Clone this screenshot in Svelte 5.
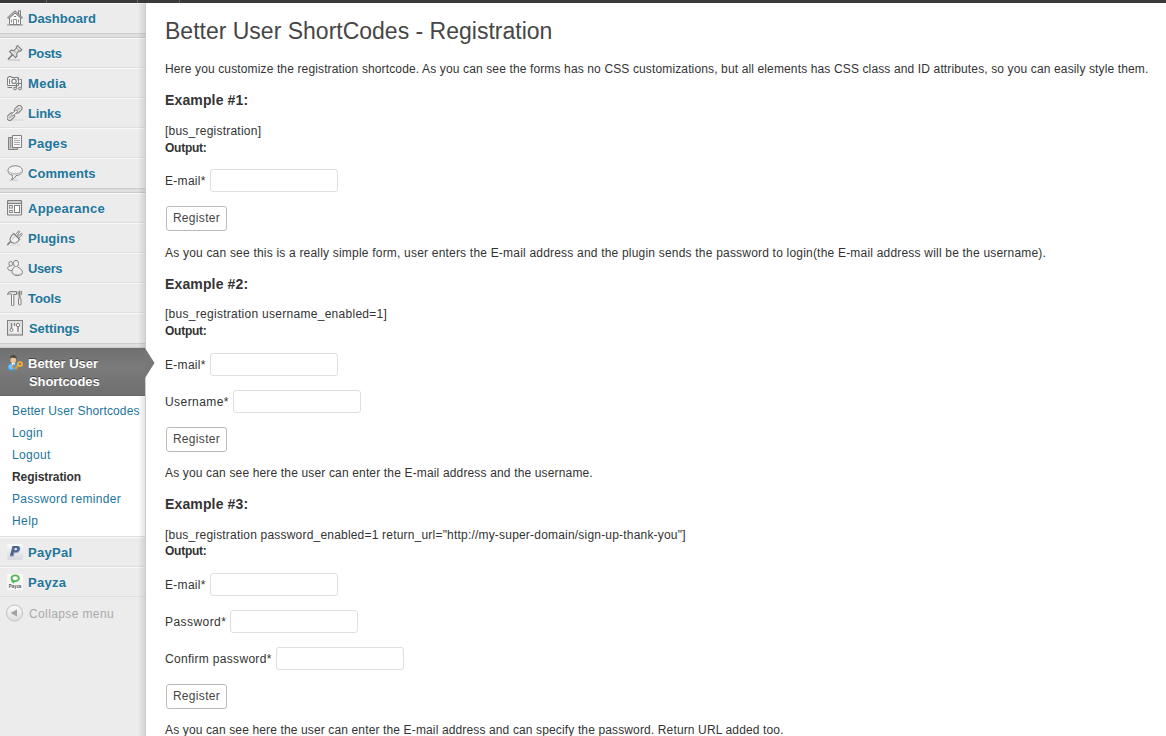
<script>
  // Each entry pairs a label with its tracking in pixels.
  const groups = [
    [['Dashboard', 0]],
    [['Posts', -0.35], ['Media', 0.3], ['Links', -0.15], ['Pages', 0.25], ['Comments', 0.05]],
    [['Appearance', 0.25], ['Plugins', 0.05], ['Users', -0.4], ['Tools', -0.1], ['Settings', -0.1]]
  ];
  const submenu = [
    ['Better User Shortcodes', 0.13], ['Login', 0.35], ['Logout', 0.35],
    ['Registration', -0.08], ['Password reminder', 0.34], ['Help', 0.4]
  ];
  const examples = [
    {
      code: ['[bus_registration]', 0.23],
      fields: [['E-mail*', 0.3]],
      note: ['As you can see this is a really simple form, user enters the E-mail address and the plugin sends the password to login(the E-mail address will be the username).', 0.2]
    },
    {
      code: ['[bus_registration username_enabled=1]', 0.28],
      fields: [['E-mail*', 0.3], ['Username*', 0.44]],
      note: ['As you can see here the user can enter the E-mail address and the username.', 0.155]
    },
    {
      code: ['[bus_registration password_enabled=1 return_url="http://my-super-domain/sign-up-thank-you"]', 0.197],
      fields: [['E-mail*', 0.3], ['Password*', 0.44], ['Confirm password*', 0.31]],
      note: ['As you can see here the user can enter the E-mail address and can specify the password. Return URL added too.', 0.135]
    }
  ];
</script>

{#snippet icon(name)}
  <svg class="icon" viewBox="0 0 16 16" width="16" height="16" fill="none" stroke="#808080" stroke-width="1">
    {#if name === 'Dashboard'}
      <path d="M2.5 8v6.5h11V8L8 3z" fill="#f7f7f7" />
      <path d="M.7 8.2 8 1.500l7.300 6.700" stroke-width="2" />
      <path d="M1.200 8 8 1.900 14.800 8" stroke="#eee" stroke-width=".6" />
      <path d="M11.500 1v3.500M13.500 1v5.500M11 .9h3" />
      <path d="M6.500 14V9.500h3V14M4.500 9.500v3M11.500 9.500v3M0 15h16" stroke="#909090" />
      <path d="M7 6.500h2" />
    {:else if name === 'Posts'}
      <path d="M1 15h12" stroke="#ccc" stroke-width="1.500" />
      <path d="m1 14.500 5-5.500" stroke="#777" stroke-width="1.400" />
      <path d="m2.500 6.500 1.800-1.400 2.500.5 2.700-2.500-.2-1.400L10.500.6l4.300 4.200-1.300 1.300-1.500-.2-2.400 2.700.4 2.500-1.500 1.500z" fill="#e0e0e0" stroke-width="1.100" />
      <path d="m7 5.700 2.800 2.700M9.500 3l3 3" stroke="#aaa" />
    {:else if name === 'Media'}
      <path d="M.5 2.500h1.200v-1h2.600v1h7.200v8H.5z" fill="#f5f5f5" />
      <circle cx="7" cy="6.300" r="2.200" fill="#fff" stroke-width="1.200" />
      <path d="M2.500 4v5M10 4h1M5 12.500H.5M12.500 4.500H14.500v8M9.500 13V8.500h5" />
      <ellipse cx="8" cy="13.500" rx="1.600" ry="1.300" fill="#ddd" /><ellipse cx="13" cy="13.500" rx="1.600" ry="1.300" fill="#ddd" />
    {:else if name === 'Links'}
      <path d="M4 15h13" stroke="#d4d4d4" />
      <g transform="translate(-.5 0) rotate(-45 8 8)">
        <rect x="-1.500" y="5.300" width="8.500" height="5.400" rx="2.700" fill="#e2e2e2" />
        <rect x=".8" y="7.400" width="3.700" height="1.200" rx=".6" fill="#eee" stroke="#999" stroke-width=".8" />
        <rect x="9" y="5.300" width="8.500" height="5.400" rx="2.700" fill="#e2e2e2" />
        <rect x="11.300" y="7.400" width="3.700" height="1.200" rx=".6" fill="#eee" stroke="#999" stroke-width=".8" />
        <rect x="4.500" y="6.900" width="7" height="2.200" rx="1" fill="#f2f2f2" stroke="#888" stroke-width=".9" />
      </g>
    {:else if name === 'Pages'}
      <path d="M1.500 2.500h4v12h-4z" fill="#c6c6c6" />
      <path d="M1.500 13.500v1h9v-2" fill="#ccc" />
      <path d="M3.500 3v10" stroke="#999" />
      <path d="M5.500.5h9v12h-9z" fill="#f7f7f7" />
      <path d="M7 3.500h3.500M7 5.500h6M7 7.500h6M7 9.500h6M12 3.500h1" stroke="#aaa" />
    {:else if name === 'Comments'}
      <path d="M2 15.300h9" stroke="#ccc" />
      <path d="M8.200.8c4.200 0 7.200 2 7.200 4.800S12.300 10.500 9 10.600c-.8 1.900-2.300 3.500-4.500 4 .9-1.200 1.200-2.500 1-4.300C2.700 9.800 1 8 1 5.600 1 2.800 4 .8 8.200.8z" fill="#f4f4f4" />
      <path d="M2 6c.5 2.500 3 3.700 6 3.700S14 8.500 14.500 6c-1.500 1.800-4 2.200-6.300 2.200S3.500 7.700 2 6z" fill="#bbb" stroke="none" />
    {:else if name === 'Appearance'}
      <rect x=".5" y=".5" width="14" height="14.500" rx="1" fill="#f2f2f2" stroke-width="1.200" />
      <path d="M1 2h13" stroke="#aaa" /><path d="M1 3.500h13" />
      <rect x="7.500" y="5.500" width="5" height="7" fill="#fff" />
      <path d="M2 5.500h4M2 8h4M2 10.500h4M2 12.500h4" /><path d="M2.500 5v3M5.500 5v3M2.500 10v3M5.500 10v3" stroke="#999" />
    {:else if name === 'Plugins'}
      <path d="M3 15h11" stroke="#d8d8d8" />
      <path d="M0 14.500c2 .5 1-2.500 4.300-3" stroke-width="1.700" />
      <path d="m4 12-1-2.500c.7-3.500 2.200-5.200 4.200-5.500l5 5c-.5 2.700-2.500 4-5.500 4.200z" fill="#f1f1f1" stroke-width="1.100" />
      <path d="m6 2.800 7.200 7.200M8.500 4.500l3.200-3.700 1 .8L10 6M10.500 6.800l4-3.500.8 1.200-3.700 3.700" />
      <path d="M5.500 9.500c.4-1.800 1.300-3 2.500-3.500" stroke="#bbb" />
    {:else if name === 'Users'}
      <ellipse cx="3.700" cy="3.700" rx="1.800" ry="2.300" fill="#eee" />
      <path d="M3 6C.8 6.500.2 8 1 9.300c.8 1.200 3 1.500 5 1" fill="#eee" />
      <ellipse cx="9" cy="3.500" rx="2.500" ry="3.200" fill="#f2f2f2" />
      <path d="M7.500 6.800c-.8 1.200-2.500 2.500-2.500 5 0 2.600 2.200 3.700 5.200 3.700s5.300-1 5.300-3.200c0-2.500-3-4.200-5-5.500" fill="#eee" />
      <path d="M6 13.500c2 1.500 6.500 1.500 8.500 0" stroke="#bbb" />
    {:else if name === 'Tools'}
      <path d="M.5 4.500C1 2 2.500 1.500 4 1.500h5.500v3H6.800v10.800H4.500V4.200C3 3.700 1.700 3.800.5 4.500z" fill="#ddd" />
      <path d="M5.500 5v10" stroke="#fff" />
      <path d="M12.500.8v7" stroke-width="1.800" /><path d="M11 1.500v3M14.500.8v4" stroke="#888" />
      <rect x="11.500" y="8" width="2.500" height="7" rx="1" fill="#eee" />
    {:else if name === 'Settings'}
      <rect x=".5" y=".5" width="15" height="14.500" fill="#f4f4f4" stroke-width="1.200" />
      <rect x="2" y="2" width="12" height="11.500" stroke="#ccc" stroke-width=".7" />
      <path d="M4.500 3v6" stroke="#888" stroke-width="1.600" /><circle cx="4.500" cy="10" r="1.500" fill="#fff" />
      <path d="M7.500 3v3M11 6v6" stroke-width="1.400" /><circle cx="11" cy="5" r="1.700" fill="#fff" />
    {/if}
  </svg>
{/snippet}

<div class="adminbar"><i></i><i></i><i></i></div>
<div class="page">
  <nav class="sidebar">
    {#each groups as group}
      {#each group as [name, tracking], n}
        <a class="item" class:last={n === group.length - 1}>{@render icon(name)}<span class:nudge={name === 'Settings'} style:letter-spacing="{tracking}px">{name}</span></a>
      {/each}
      <div class="separator"></div>
    {/each}
    <a class="item active">
      <svg class="icon" viewBox="0 0 16 16" width="16" height="16">
        <path d="M.5 13.500c0-3.500 1.500-5.500 4.500-5.500h2c3 0 4 2 4 4.500 0 2-2 3-5.500 3s-5-.7-5-2z" fill="#3f9be8" />
        <path d="M1.500 12c.5-2 1.500-3 3-3l2 5c-2 .7-5 .2-5-2z" fill="#7dc4f7" />
        <path d="m4.500 8 1.800 4.500L8 8z" fill="#fff" /><path d="m6 9-.5 3 .8 1.500.8-1.500-.4-3z" fill="#d87a1c" />
        <ellipse cx="6.300" cy="4.500" rx="2.900" ry="3.700" fill="#edc698" />
        <path d="M3 4.500C2.500 1.500 4 0 6.500.1 9 .2 10 2 9.500 5L8.300 2.800C6.500 3.500 4.500 2.500 3.800 3z" fill="#50483a" />
        <path d="m12 9.500-4 4.500" stroke="#f19a1a" stroke-width="2" /><path d="m9 13 1.500 1.500" stroke="#e48a14" stroke-width="1.500" />
        <circle cx="13" cy="9" r="2" fill="#8a7d60" stroke="#f7b03a" stroke-width="1.700" />
      </svg>
      <span>Better User<br /><b>Shortcodes</b></span>
      <svg class="arrow" viewBox="0 0 10 30" width="10" height="30"><path d="M0 0 9.500 15 0 30z" fill="#777" /></svg>
    </a>
    <div class="submenu">
      {#each submenu as [entry, tracking]}
        <a class:current={entry === 'Registration'} style:letter-spacing="{tracking}px">{entry}</a>
      {/each}
    </div>
    <a class="item">
      <svg class="icon" viewBox="0 0 16 16" width="16" height="16">
        <defs><linearGradient id="pp" x2="0" y2="1"><stop stop-color="#fafafa" /><stop offset="1" stop-color="#d6d8dc" /></linearGradient></defs>
        <rect width="16" height="16" rx="2" fill="url(#pp)" />
        <path d="M5.500 2h5c2.500 0 3.300 1.500 2.700 3.500-.6 2.500-2.200 3.500-4.500 3.500H7.500l-.8 3.500H3z" fill="#8199bd" />
        <path d="M5.700 2h4c2.500 0 3.200 1.300 2.700 3.200C11.800 7.500 10 8 8 8H6.700l-.9 3.500H3z" fill="#4b6591" />
        <path d="m7.800 4-.5 2.200h1.200c1 0 1.600-.4 1.600-1.200s-.6-1-1.300-1z" fill="#e8ebf1" />
      </svg>
      <span class="wide">PayPal</span>
    </a>
    <a class="item">
      <svg class="icon" viewBox="0 0 16 16" width="16" height="16">
        <rect width="16" height="16" fill="#f8f8f8" />
        <ellipse cx="8.200" cy="4.300" rx="3.700" ry="2.900" fill="none" stroke="#52b854" stroke-width="1.900" />
        <path d="M4 5.500c.3 2 1 3.500 3 4l.5-2z" fill="#52b854" />
        <text x="1.800" y="14.300" textLength="12.500" lengthAdjust="spacingAndGlyphs" font-size="4.600" font-weight="bold" fill="#555">Payza</text>
      </svg>
      <span class="wide">Payza</span>
    </a>
    <a class="collapse">
      <svg viewBox="0 0 18 18" width="18" height="18">
        <defs><linearGradient id="cl" x2="0" y2="1"><stop stop-color="#fafafa" /><stop offset="1" stop-color="#dedede" /></linearGradient></defs>
        <circle cx="8.500" cy="9" r="8" fill="url(#cl)" stroke="#c0c0c0" /><path d="M4.500 9 11 5.500v7z" fill="#a3a3a3" />
      </svg>
      <span>Collapse menu</span>
    </a>
  </nav>
  <main>
    <h2>Better User ShortCodes - Registration</h2>
    <p class="intro">Here you customize the registration shortcode. As you can see the forms has no CSS customizations, but all elements has CSS class and ID attributes, so you can easily style them.</p>
    {#each examples as ex, i}
      <section>
        <h4>Example #{i + 1}:</h4>
        <div class="code" style:letter-spacing="{ex.code[1]}px">{ex.code[0]}</div>
        <div class="output">Output:</div>
        <form>
          {#each ex.fields as [field, tracking]}
            <label><span style:letter-spacing="{tracking}px">{field}</span><input type="text" /></label>
          {/each}
          <button type="button">Register</button>
        </form>
        <p style:letter-spacing="{ex.note[1]}px">{ex.note[0]}</p>
      </section>
    {/each}
  </main>
</div>

<style>
  :global(body) { margin: 0; overflow: hidden; background: #fff; }
  .adminbar { height: 3px; background: #3a3a3a; display: flex; }
  .adminbar i { width: 1px; margin-left: 46px; background: #666; }
  .adminbar i + i { margin-left: 90px; }
  .adminbar i + i + i { margin-left: 41px; }
  .page {
    display: flex; height: 733px; overflow: hidden;
    font-family: "Liberation Sans", Arial, sans-serif; font-size: 12px; color: #333;
  }
  .sidebar {
    position: relative; flex: none; box-sizing: border-box; width: 146px;
    background: #ececec; border-right: 1px solid #ccc;
  }
  .sidebar::after {
    content: ""; position: absolute; top: 0; right: 0; bottom: 0; width: 7px;
    background: linear-gradient(to right, rgba(0, 0, 0, 0), rgba(0, 0, 0, .1)); pointer-events: none;
  }
  .item {
    display: flex; gap: 5px; box-sizing: border-box; height: 30px; padding-left: 7px;
    border-top: 1px solid #f9f9f9; border-bottom: 1px solid #dfdfdf;
    font-size: 13px; font-weight: bold; line-height: 18px; color: #21759b;
    text-shadow: 0 1px 0 rgba(255, 255, 255, .5);
  }
  .item.last { border-bottom-color: #ececec; }
  .icon { flex: none; margin-top: 6px; }
  .item span { padding-top: 6px; }
  .item .nudge { padding-left: 1px; }
  .item .wide { letter-spacing: .3px; }
  .separator { box-sizing: border-box; height: 5px; background: #dfdfdf; border-top: 1px solid #ccc; border-bottom: 1px solid #ccc; }
  .active {
    position: relative; z-index: 1; height: 48px; border: 0; color: #fff;
    background: linear-gradient(#6f6f6f, #7b7b7b 40%, #6f6f6f); border-bottom: 1px solid #666;
    text-shadow: 0 -1px 0 #444;
  }
  .active .icon { margin-top: 7px; }
  .active span { padding-top: 7px; }
  .active b { padding-left: 1px; letter-spacing: -.1px; }
  .arrow { position: absolute; left: 145px; top: 0; }
  .submenu {
    display: flex; flex-direction: column; box-sizing: border-box; height: 141px; padding: 4px 0 0 12px;
    background: #fff; border-bottom: 1px solid #dfdfdf;
  }
  .submenu a { height: 22px; line-height: 22px; color: #21759b; white-space: nowrap; }
  .submenu .current { color: #333; font-weight: bold; }
  .collapse { display: flex; gap: 5px; padding: 7px 0 0 6px; line-height: 21px; letter-spacing: .38px; color: #aaa; }
  main { flex: 1; min-width: 0; padding-left: 19px; white-space: nowrap; }
  h2 { margin: 14px 0 0; height: 29px; font-size: 23px; font-weight: normal; line-height: 29px; color: #464646; }
  p { margin: 0; height: 17px; line-height: 17px; }
  .intro { margin: 15px 0 14.4px; letter-spacing: .133px; }
  section { padding-bottom: 14px; }
  h4 { margin: 0; height: 17px; line-height: 17px; font-size: 14px; letter-spacing: .14px; }
  .code { margin-top: 13.4px; height: 16.8px; line-height: 16.8px; }
  .output { height: 16.8px; line-height: 16.8px; font-weight: bold; letter-spacing: -.25px; }
  form { display: flex; flex-direction: column; align-items: flex-start; padding-top: 13px; }
  label { display: flex; gap: 4px; height: 36.75px; }
  label span { line-height: 25px; }
  input {
    box-sizing: border-box; width: 128px; height: 23px; margin: 0; padding: 0;
    border: 1px solid #dfdfdf; border-radius: 3px; background: #fff;
  }
  button {
    box-sizing: border-box; width: 61px; height: 25px; margin: .25px 0 13.55px 1px; padding: 0;
    border: 1px solid #bbb; border-radius: 3px; background: #fff;
    font: 12px/23px "Liberation Sans", Arial, sans-serif; letter-spacing: .32px; color: #464646;
  }
</style>
